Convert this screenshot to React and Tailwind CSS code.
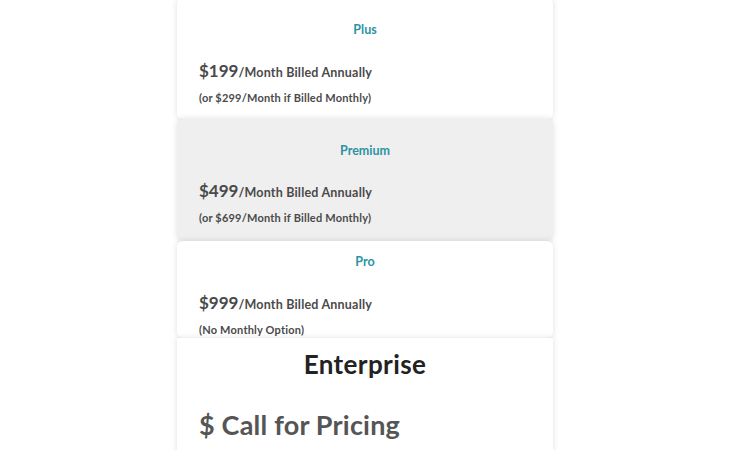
const plans = [
  {
    name: "Plus",
    price: "$199",
    note: "(or $299/Month if Billed Monthly)",
    bg: "bg-white",
    pad: "pt-[24px] pb-[13px]",
    gap: "mt-[21px]",
    top: "-mt-[2px]",
  },
  {
    name: "Premium",
    price: "$499",
    note: "(or $699/Month if Billed Monthly)",
    bg: "bg-[#efefef]",
    pad: "pt-[24px] pb-[15px]",
    gap: "mt-[20px]",
    top: "",
  },
  {
    name: "Pro",
    price: "$999",
    note: "(No Monthly Option)",
    bg: "bg-white",
    pad: "pt-[13px] pb-0",
    gap: "mt-[21px]",
    top: "",
  },
]

const PlanCard = ({ plan }) => (
  <div className={`${plan.bg} ${plan.pad} ${plan.top} px-[22px] rounded-md shadow-[0_0_6px_rgba(0,0,0,0.13)]`}>
    <h3 className="text-center text-[12.5px] leading-[16px] font-bold text-[#2b94a3]">{plan.name}</h3>
    <p className={`${plan.gap} leading-[24px] font-bold text-[#4a4a4a]`}>
      <span className="text-[17px]">{plan.price}</span>
      <span className="text-[12.5px] tracking-[0.2px]">/Month Billed Annually</span>
    </p>
    <p className="mt-[5px] text-[11px] leading-[16px] font-bold tracking-[0.2px] text-[#4a4a4a]">{plan.note}</p>
  </div>
)

export default function App() {
  return (
    <div className="w-[733px] h-[450px] overflow-hidden bg-white font-['Lato',sans-serif]">
      <div className="ml-[177px] w-[376px] flex flex-col">
        {plans.map((p) => (
          <PlanCard key={p.name} plan={p} />
        ))}
        {/* Enterprise */}
        <div className="bg-white px-[22px] pt-[10px] pb-[20px] shadow-[0_0_6px_rgba(0,0,0,0.13)]">
          <h2 className="text-center text-[26px] leading-[32px] font-bold tracking-[0.4px] text-[#222]">Enterprise</h2>
          <p className="mt-[28px] text-[27px] leading-[34px] font-bold tracking-[0.2px] text-[#555]">$ Call for Pricing</p>
        </div>
      </div>
    </div>
  )
}
